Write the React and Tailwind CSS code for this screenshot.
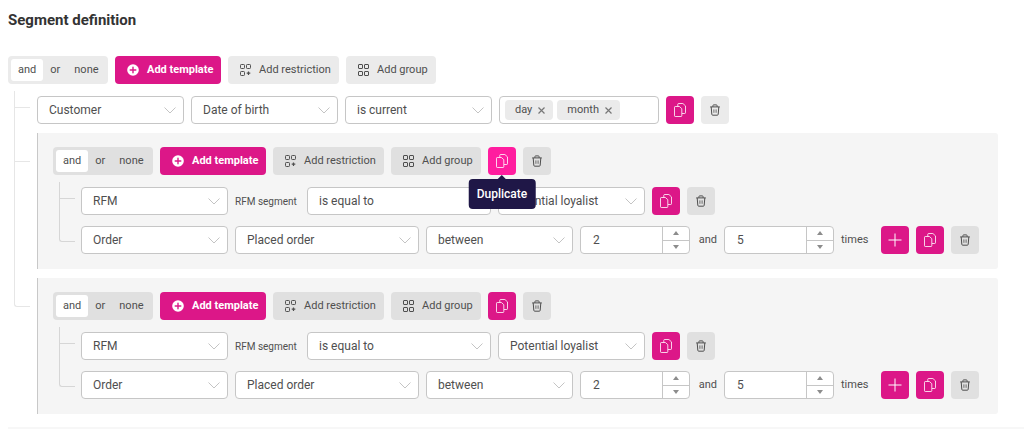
import React, { useState } from "react";

const TONES = {
  light: {
    button: "bg-[#ebebeb]",
    line: "border-[#e6e6e6]",
  },
  dark: {
    button: "bg-[#e0e0e0]",
    line: "border-[#d6d6d6]",
  },
};

function PlusCircleIcon() {
  return (
    <svg width="12" height="12" viewBox="0 0 12 12" fill="none" aria-hidden="true">
      <circle cx="6" cy="6" r="5.8" fill="#fff" />
      <path d="M6 3.2v5.6M3.2 6h5.6" stroke="#dc1788" strokeWidth="1.4" strokeLinecap="round" />
    </svg>
  );
}

function RestrictionIcon() {
  return (
    <svg width="11" height="12" viewBox="0 0 11 12" fill="none" stroke="currentColor" aria-hidden="true">
      <rect x="0.5" y="0.5" width="4" height="4" rx="0.8" />
      <rect x="6.5" y="0.5" width="4" height="4" rx="0.8" />
      <rect x="0.5" y="7.5" width="4" height="4" rx="0.8" />
      <path d="M8.5 7.4v3.6M6.7 9.2h3.6" strokeWidth="1.2" />
    </svg>
  );
}

function GroupIcon() {
  return (
    <svg width="11" height="12" viewBox="0 0 11 12" fill="none" stroke="currentColor" aria-hidden="true">
      <rect x="0.5" y="0.5" width="4" height="4" rx="0.5" />
      <rect x="6.5" y="0.5" width="4" height="4" rx="0.5" />
      <rect x="0.5" y="7.5" width="4" height="4" rx="0.5" />
      <rect x="6.5" y="7.5" width="4" height="4" rx="0.5" />
    </svg>
  );
}

function CopyIcon() {
  return (
    <svg width="12" height="14" viewBox="0 0 12 14" fill="none" stroke="#fff" strokeOpacity="0.8" strokeLinejoin="round" aria-hidden="true">
      <path d="M1.2 3.5H5.4L7.8 5.7V12.8C7.8 13.2 7.5 13.5 7.1 13.5H1.2C0.8 13.5 0.5 13.2 0.5 12.8V4.2C0.5 3.8 0.8 3.5 1.2 3.5Z" />
      <path d="M3.8 3.3V1.2C3.8 0.8 4.1 0.5 4.5 0.5H8.9L11.5 2.9V9.8C11.5 10.2 11.2 10.5 10.8 10.5H8" />
    </svg>
  );
}

function TrashIcon() {
  return (
    <svg width="12" height="12" viewBox="0 0 12 12" fill="none" stroke="currentColor" aria-hidden="true">
      <path d="M1.2 2.9h9.6M3.9 2.8V1.7C3.9 1.2 4.2 0.9 4.6 0.9h2.8c.4 0 .7.3.7.8v1.1M2.2 3l.6 7.3c0 .6.4.9.9.9h4.6c.5 0 .9-.3.9-.9L9.8 3" />
      <path d="M4.9 5.4v3.4M7.1 5.4v3.4" strokeWidth="0.8" />
    </svg>
  );
}

function PlusIcon() {
  return (
    <svg width="14" height="14" viewBox="0 0 14 14" fill="none" stroke="#fff" aria-hidden="true">
      <path d="M7 0.5v13M0.5 7h13" />
    </svg>
  );
}

function PinkButton({ label, active, children }) {
  return (
    <button
      type="button"
      aria-label={label}
      className={`flex h-7 w-7 shrink-0 items-center justify-center rounded ${
        active ? "bg-[#ff1d9f]" : "bg-[#dc1788]"
      }`}
    >
      {children}
    </button>
  );
}

function DuplicateButton({ tooltip }) {
  return (
    <div className="relative">
      <PinkButton label="Duplicate" active={tooltip}>
        <CopyIcon />
      </PinkButton>
      {tooltip && (
        <div
          role="tooltip"
          className="absolute top-full left-1/2 z-10 mt-1 -translate-x-1/2 rounded-sm bg-[#1f1747] px-2 py-[7px] text-[12px] leading-4 font-medium text-white"
        >
          <span className="absolute -top-1 left-1/2 -translate-x-1/2 border-x-4 border-b-4 border-x-transparent border-b-[#1f1747]" />
          Duplicate
        </div>
      )}
    </div>
  );
}

function DeleteButton({ tone }) {
  return (
    <button
      type="button"
      aria-label="Delete"
      className={`flex h-7 w-7 shrink-0 items-center justify-center rounded ${TONES[tone].button}`}
    >
      <TrashIcon />
    </button>
  );
}

function OperatorToggle({ tone }) {
  const [value, setValue] = useState("and");

  return (
    <div className={`flex h-7 w-[100px] shrink-0 rounded p-[3px] ${TONES[tone].button}`}>
      {["and", "or", "none"].map((option) => (
        <button
          key={option}
          type="button"
          aria-pressed={value === option}
          onClick={() => setValue(option)}
          className={`rounded-[3px] px-[7px] text-[11px] ${value === option ? "bg-white" : ""}`}
        >
          {option}
        </button>
      ))}
    </div>
  );
}

function Toolbar({ tone, nested, tooltip }) {
  return (
    <div className="flex gap-[7px]">
      <OperatorToggle tone={tone} />
      <button
        type="button"
        className="flex h-7 w-[106px] items-center gap-2 rounded bg-[#dc1788] pl-3 text-[11px] font-bold whitespace-nowrap text-white"
      >
        <PlusCircleIcon />
        Add template
      </button>
      <button
        type="button"
        className={`flex h-7 w-[111px] items-center gap-2 rounded pl-3 text-[11px] whitespace-nowrap ${TONES[tone].button}`}
      >
        <RestrictionIcon />
        Add restriction
      </button>
      <button
        type="button"
        className={`flex h-7 w-[90px] items-center gap-2 rounded pl-3 text-[11px] whitespace-nowrap ${TONES[tone].button}`}
      >
        <GroupIcon />
        Add group
      </button>
      {nested && (
        <>
          <DuplicateButton tooltip={tooltip} />
          <DeleteButton tone={tone} />
        </>
      )}
    </div>
  );
}

function Select({ label, value, wide }) {
  return (
    <div className={`relative shrink-0 ${wide ? "w-[184px]" : "w-[147px]"}`}>
      <select
        aria-label={label}
        defaultValue={value}
        className="h-7 w-full appearance-none rounded border border-[#c6c6c6] bg-white pr-6 pl-[11px] text-[12px]"
      >
        <option>{value}</option>
      </select>
      <svg
        width="12"
        height="7"
        viewBox="0 0 12 7"
        fill="none"
        stroke="#c4c4c4"
        className="pointer-events-none absolute top-[11px] right-2"
        aria-hidden="true"
      >
        <path d="M0.5 0.5L6 6L11.5 0.5" />
      </svg>
    </div>
  );
}

function NumberField({ label, initial }) {
  const [value, setValue] = useState(initial);

  return (
    <div className="flex h-7 w-[110px] shrink-0 overflow-hidden rounded border border-[#c6c6c6] bg-white">
      <input
        type="text"
        inputMode="numeric"
        aria-label={label}
        value={value}
        onChange={(e) => setValue(Number(e.target.value) || 0)}
        className="w-0 grow pl-3 text-[12px] outline-none"
      />
      <div className="flex w-[27px] flex-col divide-y divide-[#c6c6c6] border-l border-[#c6c6c6] text-[#8c8c8c]">
        <button
          type="button"
          aria-label="Increase"
          onClick={() => setValue(value + 1)}
          className="flex flex-1 items-center justify-center"
        >
          <svg width="6" height="4" viewBox="0 0 6 4" fill="currentColor" aria-hidden="true">
            <path d="M3 0L6 4H0Z" />
          </svg>
        </button>
        <button
          type="button"
          aria-label="Decrease"
          onClick={() => setValue(value - 1)}
          className="flex flex-1 items-center justify-center"
        >
          <svg width="6" height="4" viewBox="0 0 6 4" fill="currentColor" aria-hidden="true">
            <path d="M3 4L0 0H6Z" />
          </svg>
        </button>
      </div>
    </div>
  );
}

function TagsField() {
  const [tags, setTags] = useState(["day", "month"]);

  return (
    <div className="flex h-7 w-40 shrink-0 items-center gap-1 rounded border border-[#c6c6c6] bg-white px-[5px]">
      {tags.map((tag) => (
        <span
          key={tag}
          className="flex h-5 items-center gap-1.5 rounded-sm bg-[#ebebeb] pr-2 pl-[10px] text-[11px]"
        >
          {tag}
          <button
            type="button"
            aria-label={`Remove ${tag}`}
            onClick={() => setTags(tags.filter((t) => t !== tag))}
          >
            <svg width="7" height="7" viewBox="0 0 7 7" fill="none" stroke="#777" strokeWidth="1.2" aria-hidden="true">
              <path d="M0.5 0.5l6 6M6.5 0.5l-6 6" />
            </svg>
          </button>
        </span>
      ))}
      <input type="text" aria-label="Add date part" className="w-0 grow outline-none" />
    </div>
  );
}

// One row of the tree with the connector line on its left
function Branch({ tone, last, stem, gutter, pad, children }) {
  const line = TONES[tone].line;

  return (
    <li className="flex">
      <div className={`ml-[6px] flex w-4 shrink-0 flex-col ${gutter}`}>
        <div className={`border-b border-l ${line} ${stem} ${last ? "rounded-bl-[3px]" : ""}`} />
        {!last && <div className={`grow border-l ${line}`} />}
      </div>
      <div className={`min-w-0 grow ${pad}`}>{children}</div>
    </li>
  );
}

function Group({ tooltip }) {
  return (
    <div className="rounded-r-[3px] border-l border-[#c8c8c8] bg-[#f5f5f5] pt-[14px] pb-[15px] pl-[15px]">
      <Toolbar tone="dark" nested tooltip={tooltip} />
      <ul className="mt-[7px]">
        <Branch tone="dark" stem="h-[17px]" gutter="mr-[6px]" pad="pt-[5px]">
          <div className="flex items-center gap-[7px]">
            <Select label="Source" value="RFM" />
            <span className="w-[65px] shrink-0 text-[10px] whitespace-nowrap">RFM segment</span>
            <Select label="RFM segment condition" value="is equal to" wide />
            <Select label="RFM segment" value="Potential loyalist" />
            <DuplicateButton />
            <DeleteButton tone="dark" />
          </div>
        </Branch>
        <Branch tone="dark" last stem="h-[27px]" gutter="mr-[6px]" pad="pt-[11px]">
          <div className="flex items-center gap-[7px]">
            <Select label="Source" value="Order" />
            <Select label="Event" value="Placed order" wide />
            <Select label="Count condition" value="between" />
            <NumberField label="From" initial={2} />
            <span className="w-5 shrink-0 text-right text-[11px]">and</span>
            <NumberField label="To" initial={5} />
            <span className="w-[33px] shrink-0 text-[11px]">times</span>
            <PinkButton label="Add condition">
              <PlusIcon />
            </PinkButton>
            <DuplicateButton />
            <DeleteButton tone="dark" />
          </div>
        </Branch>
      </ul>
    </div>
  );
}

function App() {
  return (
    <main className="bg-white pt-[10px] pl-2 font-['Roboto','Liberation_Sans',sans-serif] text-[#4f4f4f]">
      <h1 className="text-[15px] leading-5 font-bold text-[#333]">Segment definition</h1>

      <div className="mt-[26px] pr-[26px]">
        <Toolbar tone="light" />
        <ul className="mt-[7px]">
          <Branch tone="light" stem="h-[17px]" gutter="mr-[7px]" pad="pt-[5px]">
            <div className="flex items-center gap-[7px]">
              <Select label="Source" value="Customer" />
              <Select label="Attribute" value="Date of birth" />
              <Select label="Condition" value="is current" />
              <TagsField />
              <DuplicateButton />
              <DeleteButton tone="light" />
            </div>
          </Branch>
          <Branch tone="light" stem="h-[38px]" gutter="mr-[7px]" pad="pt-[9px]">
            <Group tooltip />
          </Branch>
          <Branch tone="light" last stem="h-[38px]" gutter="mr-[7px]" pad="pt-[9px]">
            <Group />
          </Branch>
        </ul>
      </div>

      <hr className="mt-[13px] border-t-2 border-[#f7f7f7]" />
    </main>
  );
}

export default App;
